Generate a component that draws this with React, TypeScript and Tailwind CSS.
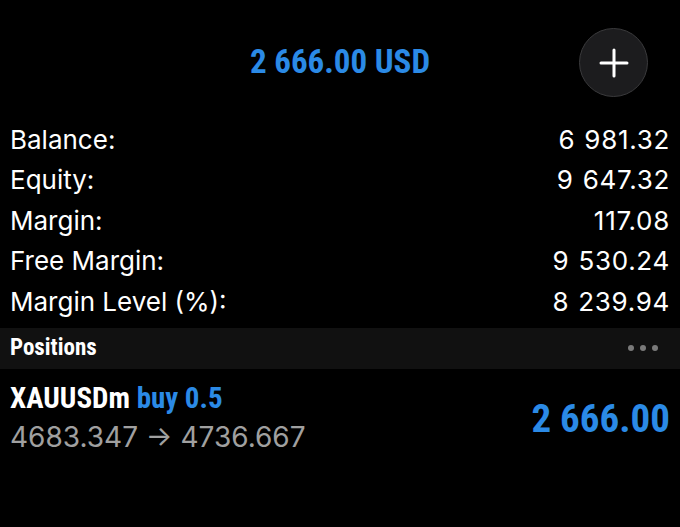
const cond = "font-['Roboto',sans-serif] font-stretch-[75%] font-bold";
const sans = "font-['Inter','Roboto',sans-serif]";

const rows: [string, string][] = [
  ["Balance:", "6 981.32"],
  ["Equity:", "9 647.32"],
  ["Margin:", "117.08"],
  ["Free Margin:", "9 530.24"],
  ["Margin Level (%):", "8 239.94"],
];

export default function App() {
  return (
    <div className="w-[680px] h-[527px] bg-black text-white overflow-hidden">
      <div className="relative h-[119px] flex items-center justify-center">
        <div className={`${cond} text-[33px] text-[#2b8ae6] pt-[4px]`}>2 666.00 USD</div>
        <button className="absolute left-[579px] top-[28px] w-[69px] h-[69px] rounded-full bg-[#1c1c1e] border border-[#3a3a3c] flex items-center justify-center">
          <svg width="32" height="32" viewBox="0 0 32 32">
            <path d="M16 3v26M3 16h26" stroke="#fff" strokeWidth="3" strokeLinecap="round" />
          </svg>
        </button>
      </div>
      <div className={`${sans} px-[10px] flex flex-col`}>
        {rows.map(([k, v]) => (
          <div key={k} className="h-[40.5px] flex items-center justify-between text-[26px]">
            <span>{k}</span>
            <span className="[word-spacing:1px] tracking-[0.7px]">{v}</span>
          </div>
        ))}
      </div>
      <div className="mt-[6px] h-[41px] bg-[#111111] px-[10px] flex items-center justify-between">
        <span className={`${cond} text-[23px]`}>Positions</span>
        <div className="flex gap-[6px] pr-[12px]">
          <span className="w-[6px] h-[6px] rounded-full bg-[#7a7a7a]" />
          <span className="w-[6px] h-[6px] rounded-full bg-[#7a7a7a]" />
          <span className="w-[6px] h-[6px] rounded-full bg-[#7a7a7a]" />
        </div>
      </div>
      <div className="px-[10px] pt-[10px] flex items-center justify-between">
        <div className="flex flex-col">
          <div className={`${cond} text-[29px] leading-[38px]`}>
            XAUUSDm <span className="text-[#2b8ae6]">buy 0.5</span>
          </div>
          <div className={`${sans} text-[28px] leading-[40px] text-[#a0a0a0]`}>4683.347 → 4736.667</div>
        </div>
        <div className={`${cond} text-[39px] text-[#2b8ae6] pt-[4px]`}>2 666.00</div>
      </div>
    </div>
  );
}
